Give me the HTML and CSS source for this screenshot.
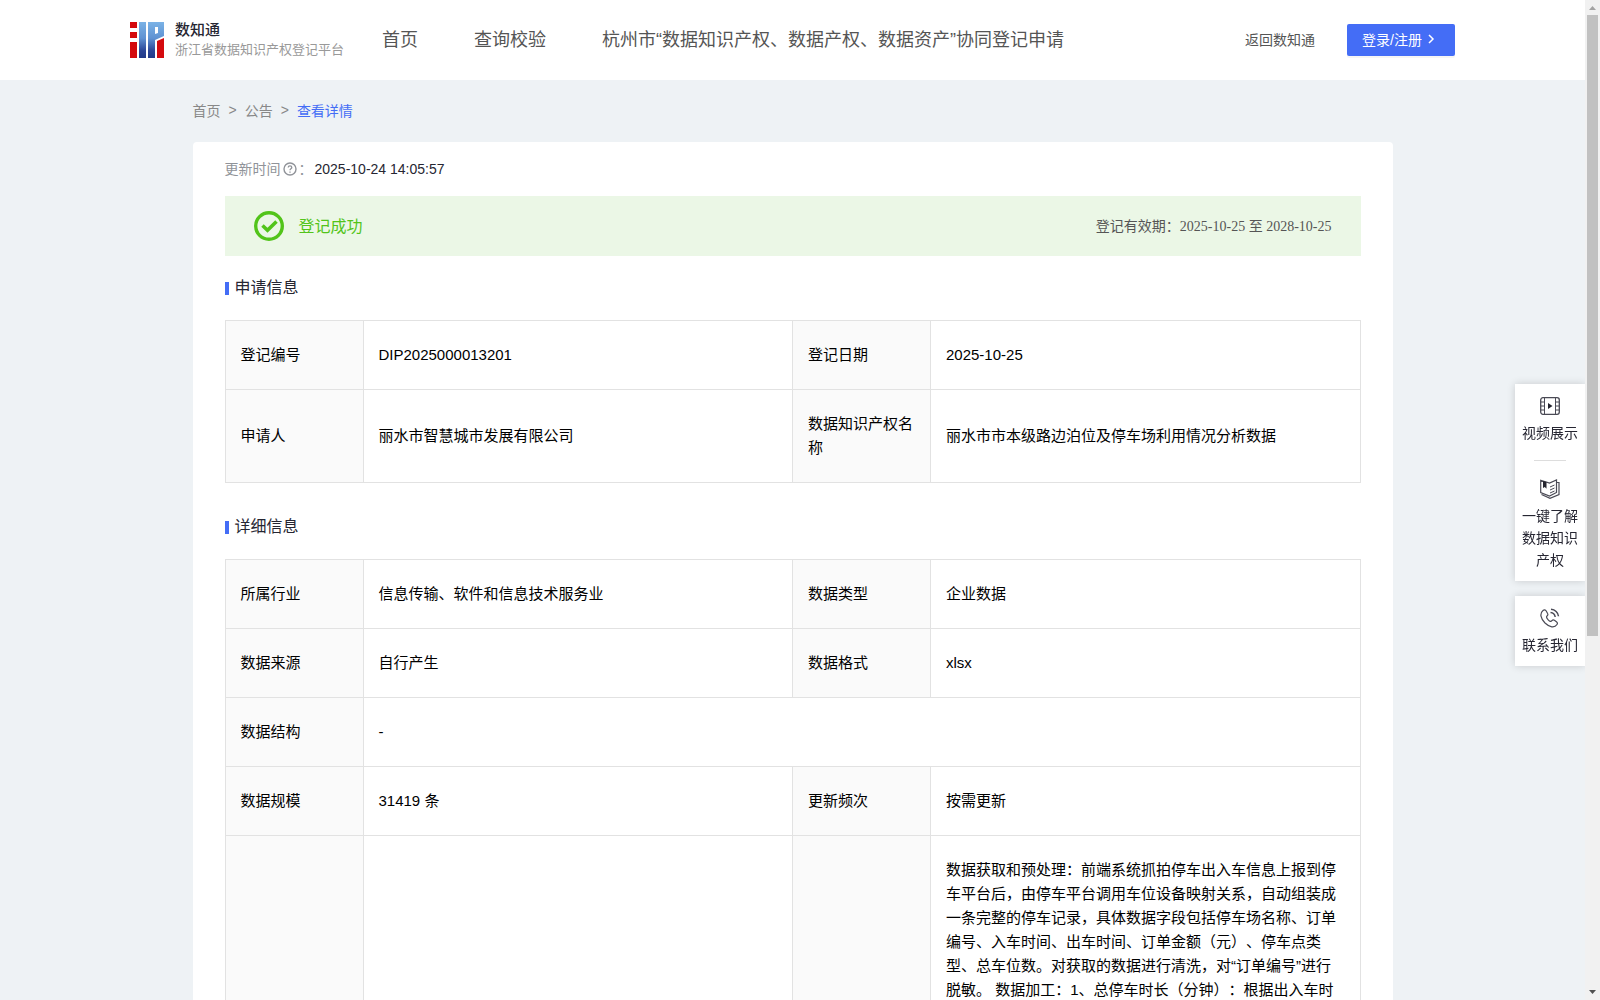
FILE: index.html
```html
<!DOCTYPE html>
<html lang="zh-CN">

<head>
    <meta charset="UTF-8">
    <meta name="viewport" content="width=device-width, initial-scale=1.0">
    <title>数知通 - 查看详情</title>
    <link rel="stylesheet" href="styles.css">
</head>

<body>
    <div class="page">
        <header class="header">
            <div class="header-inner">
                <a class="logo" href="#">
                    <svg width="34" height="36" viewBox="0 0 34 36" aria-hidden="true">
                        <defs>
                            <linearGradient id="blue" x1="0" y1="0" x2="0" y2="1">
                                <stop offset="0" stop-color="#7ab2e6" />
                                <stop offset="0.45" stop-color="#5f92d2" />
                                <stop offset="0.8" stop-color="#2b4596" />
                                <stop offset="1" stop-color="#223a88" />
                            </linearGradient>
                        </defs>
                        <path fill="#d40a0e" d="M0 0h7v6H0zM0 10h7v6H0zM0 20h7v16H0zM27 19l7-3v20h-7z" />
                        <path fill="url(#blue)" d="M9 0h7v36H9zM18 0h16v14l-9 4v18h-7zM25 5v7l3-1V5z" fill-rule="evenodd" />
                    </svg>
                    <span class="logo-text">
                        <strong>数知通</strong>
                        <small>浙江省数据知识产权登记平台</small>
                    </span>
                </a>
                <nav class="nav">
                    <a href="#">首页</a>
                    <a href="#">查询校验</a>
                    <a href="#">杭州市“数据知识产权、数据产权、数据资产”协同登记申请</a>
                </nav>
                <a class="back-link" href="#">返回数知通</a>
                <button class="login-btn" type="button">
                    登录/注册
                    <svg width="14" height="14" viewBox="0 0 14 14" aria-hidden="true">
                        <path d="M5 3l4 4-4 4" fill="none" stroke="#fff" stroke-width="1.5" />
                    </svg>
                </button>
            </div>
        </header>

        <main class="container">
            <nav class="breadcrumb">
                <a href="#">首页</a>
                <span>&gt;</span>
                <a href="#">公告</a>
                <span>&gt;</span>
                <a class="current" href="#">查看详情</a>
            </nav>

            <div class="card">
                <div class="update-time">
                    <span>更新时间</span>
                    <svg width="14" height="14" viewBox="0 0 14 14" fill="none" stroke="#909399" aria-hidden="true">
                        <circle cx="7" cy="7" r="6" stroke-width="1.4" />
                        <path d="M5.2 5.6c0-2.4 3.6-2.3 3.6-.1 0 1.3-1.8 1.4-1.8 2.8M7 9.5v1.2" stroke-width="1.3" />
                    </svg>
                    <span>：</span>
                    <time>2025-10-24 14:05:57</time>
                </div>

                <div class="banner">
                    <svg width="30" height="30" viewBox="0 0 30 30" fill="none" stroke="#52c41a" aria-hidden="true">
                        <circle cx="15" cy="15" r="13.3" stroke-width="3.4" />
                        <path d="M8.5 14.5l5 4.7 9-8.7" stroke-width="3.6" />
                    </svg>
                    <span class="banner-status">登记成功</span>
                    <span class="banner-date">登记有效期：<span class="date-range">2025-10-25 至 2028-10-25</span></span>
                </div>

                <section class="section">
                    <h2>申请信息</h2>
                    <table>
                        <colgroup>
                            <col class="col-label">
                            <col class="col-value">
                            <col class="col-label">
                            <col class="col-value">
                        </colgroup>
                        <tr>
                            <th>登记编号</th>
                            <td>DIP2025000013201</td>
                            <th>登记日期</th>
                            <td>2025-10-25</td>
                        </tr>
                        <tr>
                            <th>申请人</th>
                            <td>丽水市智慧城市发展有限公司</td>
                            <th>数据知识产权名称</th>
                            <td>丽水市市本级路边泊位及停车场利用情况分析数据</td>
                        </tr>
                    </table>
                </section>

                <section class="section">
                    <h2>详细信息</h2>
                    <table>
                        <colgroup>
                            <col class="col-label">
                            <col class="col-value">
                            <col class="col-label">
                            <col class="col-value">
                        </colgroup>
                        <tr>
                            <th>所属行业</th>
                            <td>信息传输、软件和信息技术服务业</td>
                            <th>数据类型</th>
                            <td>企业数据</td>
                        </tr>
                        <tr>
                            <th>数据来源</th>
                            <td>自行产生</td>
                            <th>数据格式</th>
                            <td>xlsx</td>
                        </tr>
                        <tr>
                            <th>数据结构</th>
                            <td colspan="3">-</td>
                        </tr>
                        <tr>
                            <th>数据规模</th>
                            <td>31419 条</td>
                            <th>更新频次</th>
                            <td>按需更新</td>
                        </tr>
                        <tr class="row-rules">
                            <th></th>
                            <td></td>
                            <th></th>
                            <td>数据获取和预处理：前端系统抓拍停车出入车信息上报到停车平台后，由停车平台调用车位设备映射关系，自动组装成一条完整的停车记录，具体数据字段包括停车场名称、订单编号、入车时间、出车时间、订单金额（元）、停车点类型、总车位数。对获取的数据进行清洗，对“订单编号”进行脱敏。 数据加工：1、总停车时长（分钟）：根据出入车时</td>
                        </tr>
                    </table>
                </section>
            </div>
        </main>
    </div>

    <aside class="float-bar">
        <div class="float-box">
            <a href="#">
                <svg width="20" height="20" viewBox="0 0 20 20" fill="none" stroke="#4a4a55" aria-hidden="true">
                    <rect x="0.7" y="1.7" width="18.6" height="16.6" rx="2.2" stroke-width="1.3" />
                    <path d="M4.5 2v16M15.5 2v16M1 6h3.500M1 10h3.500M1 14h3.500M15.500 6H19M15.500 10H19M15.500 14H19" />
                    <path d="M8 7l4.500 3L8 13z" fill="#25252f" stroke="none" />
                </svg>
                视频展示
            </a>
            <hr>
            <a href="#">
                <svg width="20" height="20" viewBox="0 0 20 20" fill="none" stroke="#4a4a55" aria-hidden="true">
                    <path d="M.7 1.200L9.500 4l7-3v12.500l-7 3.500-8.800-3.500zM17 3.500h2v12l-9 3.800-8.500-3.800" stroke-width="1.200" />
                    <path d="M3 2l3.500 1v6.700L4.800 8 3 9z" fill="#25252f" stroke="none" />
                    <path d="M10 8l4.500-2M10 11l4.500-2M10 14l4.500-2" />
                </svg>
                一键了解数据知识产权
            </a>
        </div>
        <div class="float-box">
            <a href="#">
                <svg width="20" height="20" viewBox="0 0 20 20" fill="none" stroke="#4a4a55" aria-hidden="true">
                    <path d="M3 2.500C-.5 5.500.5 10.500 5 15c4.500 4.300 9.500 5.300 12 1.500.8-1.200.4-2-.6-2.800l-2-1.400c-1-.7-1.800-.4-2.500.4-1 1.200-2 .8-3.700-.9S6 9 7 8c.9-.8 1.200-1.500.6-2.500L6.200 3C5.400 1.600 4.200 1.400 3 2.500z" stroke-width="1.200" />
                    <path d="M10.500 4.500c2.500.2 4.300 1.900 4.700 4.500M11 1.300c4 .3 7.200 3.200 7.500 7" stroke-width="1.500" />
                </svg>
                联系我们
            </a>
        </div>
    </aside>

    <div class="scrollbar" aria-hidden="true">
        <svg width="15" height="15" viewBox="0 0 15 15"><path d="M4 10l3.500-4 3.500 4z" fill="#a3a3a3" /></svg>
        <div class="scrollbar-track">
            <div class="scrollbar-thumb"></div>
        </div>
        <svg width="15" height="15" viewBox="0 0 15 15"><path d="M4 5l3.500 4 3.500-4z" fill="#505050" /></svg>
    </div>
</body>

</html>
```
FILE: styles.css
```css
* {
    box-sizing: border-box;
}

html {
    scrollbar-width: none;
}

body {
    margin: 0;
    background-color: #eef2f5;
    font-family: "Liberation Sans", "Noto Sans CJK SC", sans-serif;
    font-size: 14px;
    color: #262632;
    text-spacing-trim: space-all;
}

a {
    color: inherit;
    text-decoration: none;
}

.page {
    padding-right: 15px;
}

.header {
    background-color: #fff;
}

.header-inner {
    display: flex;
    align-items: center;
    height: 80px;
    padding: 0 130px;
}

.logo {
    display: flex;
    align-items: center;
    gap: 11px;
    width: 252px;
}

.logo-text strong,
.logo-text small {
    display: block;
    line-height: 20px;
    white-space: nowrap;
}

.logo-text strong {
    font-size: 15px;
    font-weight: 500;
}

.logo-text small {
    font-size: 13px;
    color: #999;
}

.nav {
    display: flex;
    flex: 1;
    gap: 56px;
    padding-bottom: 4px;
    font-size: 18px;
    color: #555;
    white-space: nowrap;
}

.back-link {
    margin-right: 32px;
    padding-bottom: 2px;
    color: #555;
}

.login-btn {
    display: flex;
    align-items: center;
    gap: 2px;
    width: 108px;
    height: 32px;
    padding: 0 15px 2px;
    border: none;
    border-radius: 2px;
    background-color: #446df6;
    box-shadow: 0 2px 0 rgba(0, 0, 0, 0.04);
    color: #fff;
    font: inherit;
    white-space: nowrap;
    cursor: pointer;
}

.login-btn svg {
    flex: none;
}

.container {
    max-width: 1200px;
    margin: 0 auto;
    padding-bottom: 40px;
}

.breadcrumb {
    display: flex;
    align-items: center;
    gap: 8px;
    height: 62px;
    padding-bottom: 2px;
    color: #888;
}

.breadcrumb .current {
    color: #446df6;
}

.card {
    padding: 16px 32px;
    border-radius: 4px;
    background-color: #fff;
}

.update-time {
    display: flex;
    align-items: center;
    margin-bottom: 16px;
    line-height: 22px;
    color: #909399;
}

.update-time svg {
    margin: 0 2px;
}

.update-time time {
    margin-left: 2px;
    color: #262632;
}

.banner {
    display: flex;
    align-items: center;
    gap: 15px;
    height: 60px;
    margin-bottom: 20px;
    padding: 0 29px;
    background-color: #ebf7e6;
}

.banner-status {
    flex: 1;
    padding-bottom: 2px;
    font-size: 16px;
    color: #52c41a;
}

.banner-date {
    padding-bottom: 2px;
    color: #555;
}

.date-range {
    font-family: "Liberation Serif", "Noto Sans CJK SC", serif;
}

.section {
    margin-bottom: 32px;
}

.section h2 {
    display: flex;
    align-items: center;
    gap: 6px;
    margin: 0 0 20px;
    font-size: 16px;
    font-weight: normal;
    line-height: 24px;
}

.section h2::before {
    content: "";
    width: 4px;
    height: 13px;
    background-color: #446df6;
}

table {
    width: 100%;
    border-collapse: collapse;
    table-layout: fixed;
    font-size: 15px;
    line-height: 24px;
    color: #000;
}

.col-label {
    width: 138px;
}

th,
td {
    padding: 22px 15px;
    border: 1px solid #e2e2e2;
    font-weight: normal;
    text-align: left;
}

th {
    background-color: #fafafa;
}

.row-rules {
    height: 560px;
    vertical-align: top;
}

.float-bar {
    position: fixed;
    top: 384px;
    right: 15px;
    width: 70px;
}

.float-box {
    margin-bottom: 15px;
    padding: 12px 7px 10px;
    background-color: #fff;
    box-shadow: 0 0 8px rgba(0, 0, 0, 0.16);
    line-height: 22px;
    text-align: center;
}

.float-box svg {
    display: block;
    margin: 0 auto 6px;
}

.float-box a {
    display: block;
}

.float-box hr {
    width: 32px;
    margin: 16px auto 18px;
    border: none;
    border-top: 1px solid #ddd;
}

.scrollbar {
    display: flex;
    flex-direction: column;
    position: fixed;
    top: 0;
    right: 0;
    bottom: 0;
    width: 15px;
    background-color: #f1f1f1;
}

.scrollbar-track {
    flex: 1;
    padding: 0 2px;
}

.scrollbar-thumb {
    height: 64%;
    background-color: #c1c1c1;
}
```
